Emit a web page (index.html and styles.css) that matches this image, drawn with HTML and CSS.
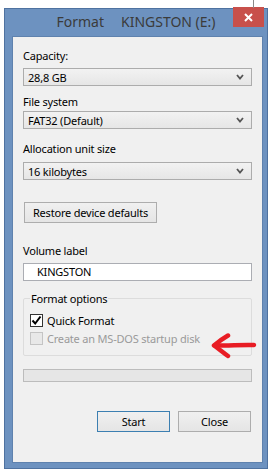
FILE: index.html
```html
<!DOCTYPE html>
<html lang="en">
<head>
    <meta charset="UTF-8">
    <title>Format KINGSTON (E:)</title>
    <link rel="stylesheet" href="styles.css">
</head>
<body>
    <div class="window">
        <div class="titlebar">
            <div class="title">
                <span>Format</span>
                <span>KINGSTON (E:)</span>
            </div>
            <div class="btn-close">
                <svg width="9" height="9" viewBox="0 0 9 9"><path d="M1 1L8 8M8 1L1 8" stroke="#fff" stroke-width="2"/></svg>
            </div>
        </div>
        <div class="client">
            <div class="label label-capacity">Capacity:</div>
            <div class="combo combo-1">
                <span>28,8 GB</span>
                <svg class="chevron" width="8" height="6" viewBox="0 0 8 6"><path d="M1 1L4 4.5L7 1" fill="none" stroke="#555" stroke-width="1.8"/></svg>
            </div>
            <div class="label label-fs">File system</div>
            <div class="combo combo-2">
                <span>FAT32 (Default)</span>
                <svg class="chevron" width="8" height="6" viewBox="0 0 8 6"><path d="M1 1L4 4.5L7 1" fill="none" stroke="#555" stroke-width="1.8"/></svg>
            </div>
            <div class="label label-alloc">Allocation unit size</div>
            <div class="combo combo-3">
                <span>16 kilobytes</span>
                <svg class="chevron" width="8" height="6" viewBox="0 0 8 6"><path d="M1 1L4 4.5L7 1" fill="none" stroke="#555" stroke-width="1.8"/></svg>
            </div>
            <button class="btn btn-restore">Restore device defaults</button>
            <div class="label label-volume">Volume label</div>
            <div class="textbox">KINGSTON</div>
            <fieldset class="group">
                <legend>Format options</legend>
                <div class="check-row">
                    <span class="checkbox checked">
                        <svg width="11" height="11" viewBox="0 0 11 11"><path d="M1.5 5.5L4.2 8.5L9.5 1.5" fill="none" stroke="#000" stroke-width="2"/></svg>
                    </span>
                    <span>Quick Format</span>
                </div>
                <div class="check-row disabled">
                    <span class="checkbox"></span>
                    <span>Create an MS-DOS startup disk</span>
                </div>
                <svg class="arrow" width="46" height="26" viewBox="0 0 46 26">
                    <path d="M43 12C33 11.5 20 12.5 4 12.5" fill="none" stroke="#e81c24" stroke-width="4.5" stroke-linecap="round"/>
                    <path d="M17 2.5C11 6 7 9 3 12.5C8 16 12 19.5 17 23" fill="none" stroke="#e81c24" stroke-width="4.5" stroke-linecap="round" stroke-linejoin="round"/>
                </svg>
            </fieldset>
            <div class="progress"></div>
            <div class="actions">
                <button class="btn btn-default">Start</button>
                <button class="btn">Close</button>
            </div>
        </div>
    </div>
</body>
</html>
```

FILE: styles.css
```css
* {
    margin: 0;
    padding: 0;
    box-sizing: border-box;
}

body {
    background: #fff;
    font-family: "Segoe UI", "Noto Sans", "Open Sans", sans-serif;
    font-size: 11px;
    letter-spacing: -0.2px;
    color: #000;
}

.window {
    position: relative;
    margin: 8px 0 0 4px;
    width: 264px;
    height: 461px;
    background: #6d92c0;
    border: 1px solid #4f72a0;
    display: flex;
    flex-direction: column;
}

.window::before {
    content: "";
    position: absolute;
    left: 248px;
    top: -9px;
    width: 1px;
    height: 8px;
    background: #8a8a8a;
}

.titlebar {
    height: 27px;
    display: grid;
    grid-template-columns: 1fr auto 1fr;
}

.title {
    grid-column: 2;
    display: flex;
    gap: 17px;
    align-items: center;
    font-size: 14px;
    letter-spacing: 0;
    color: #3b3b3b;
    padding-bottom: 2px;
}

.btn-close {
    grid-column: 3;
    justify-self: end;
    margin: -2px 3px 0 0;
    width: 31px;
    height: 20px;
    background: #c8504b;
    display: flex;
    justify-content: center;
    align-items: center;
}

.client {
    flex: 1;
    margin: 0 4px 5px 7px;
    background: #f0f0f0;
    border: 1px solid #5f82ae;
    padding: 11px 10px 0 10px;
    display: flex;
    flex-direction: column;
    align-items: flex-start;
}

.label {
    line-height: 15px;
    height: 15px;
}

.label-fs {
    margin-top: 8px;
}

.label-alloc {
    margin-top: 12px;
}

.label-volume {
    margin-top: 20px;
}

.combo {
    width: 229px;
    height: 18px;
    border: 1px solid #acacac;
    background: linear-gradient(#f2f2f2, #e6e6e6);
    display: flex;
    justify-content: space-between;
    align-items: center;
    padding: 0 7px 0 4px;
}

.combo-1 {
    margin-top: 5px;
}

.combo-2 {
    margin-top: 2px;
}

.combo-3 {
    margin-top: 6px;
}

.btn {
    font-family: inherit;
    font-size: 11px;
    letter-spacing: -0.2px;
    height: 21px;
    width: 73px;
    border: 1px solid #adadad;
    background: linear-gradient(#f0f0f0, #e5e5e5);
    color: #000;
}

.btn-restore {
    width: 133px;
    margin: 22px 0 0 1px;
}

.btn-default {
    border-color: #3c7fb1;
}

.textbox {
    width: 229px;
    height: 18px;
    margin-top: 5px;
    border: 1px solid #abadb3;
    background: #fff;
    line-height: 16px;
    padding-left: 13px;
}

.group {
    position: relative;
    width: 229px;
    margin-top: 10px;
    border: 1px solid #dcdcdc;
    border-radius: 2px;
    padding: 7px 6px 9px 6px;
}

.group legend {
    padding: 0 1px;
    line-height: 15px;
}

.check-row {
    display: flex;
    align-items: center;
    gap: 4px;
    height: 15px;
}

.check-row + .check-row {
    margin-top: 3px;
}

.checkbox {
    width: 13px;
    height: 13px;
    border: 1px solid #333;
    background: #fff;
    display: flex;
    justify-content: center;
    align-items: center;
}

.disabled {
    color: #9a9a9a;
}

.disabled .checkbox {
    border-color: #c4c4c4;
    background: #e8e8e8;
}

.arrow {
    position: absolute;
    right: -6px;
    top: 27px;
}

.progress {
    width: 229px;
    height: 13px;
    margin-top: 13px;
    border: 1px solid #bcbcbc;
    background: #e6e6e6;
}

.actions {
    display: flex;
    gap: 8px;
    width: 228px;
    justify-content: flex-end;
    margin-top: 29px;
}
```
